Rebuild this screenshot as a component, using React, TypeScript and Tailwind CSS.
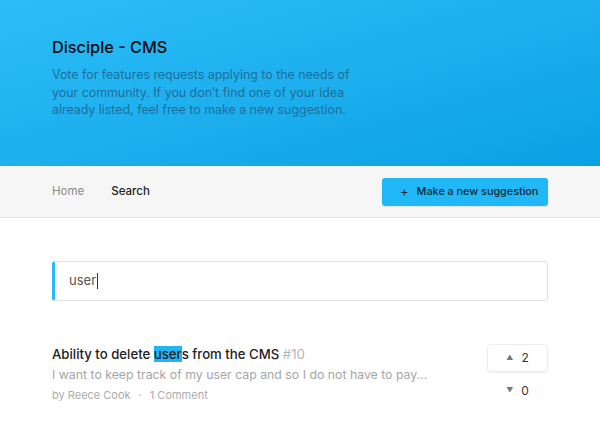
import React from 'react';

const App: React.FC = () => {
  return (
    <div className="min-h-screen bg-white" style={{ fontFamily: 'Inter, "Noto Sans", sans-serif' }}>
      {/* header */}
      <div className="h-[166px] bg-gradient-to-br from-[#2cbdf9] to-[#07a1e3] px-[52px] pt-[35px]">
        <h1 className="text-[16.3px] leading-[24px] font-medium text-[#0b0b0b]">Disciple - CMS</h1>
        <p className="mt-[7px] w-[310px] text-[12.4px] leading-[17.5px] text-[#1d6f9a]">
          Vote for features requests applying to the needs of your community. If you don’t find one of your idea
          already listed, feel free to make a new suggestion.
        </p>
      </div>

      {/* nav */}
      <div className="h-[52px] bg-[#f6f6f6] border-b border-[#e4e4e4] px-[52px] flex items-center justify-between">
        <div className="flex items-center gap-[27px] text-[11.5px]">
          <span className="text-[#8a8a8a]">Home</span>
          <span className="text-[#222] font-medium">Search</span>
        </div>
        <button className="h-[28px] w-[166px] rounded-[3px] bg-[#20b8f6] text-[10.8px] font-medium text-[#0d2a3a] flex items-center pl-[18px] gap-[8px] shadow-[0_1px_1px_rgba(0,0,0,0.08)]">
          <span className="text-[13px] font-normal">+</span>
          <span className="pt-px">Make a new suggestion</span>
        </button>
      </div>

      <div className="px-[52px]">
        {/* search */}
        <div className="mt-[43px] h-[40px] rounded-[3px] border border-[#e2e2e2] border-l-[3px] border-l-[#27bcf7] flex items-center pl-[14px]">
          <span className="text-[13px] text-[#555]">user</span>
          <span className="ml-[1px] h-[16px] w-px bg-[#333]" />
        </div>

        {/* result */}
        <div className="mt-[43px] flex justify-between">
          <div>
            <div className="text-[13.2px] leading-[20px] text-[#222] font-medium">
              Ability to delete <span className="bg-[#22b5f2]">user</span>s from the CMS{' '}
              <span className="text-[#b5b5b5] font-normal">#10</span>
            </div>
            <div className="mt-[2px] text-[12.3px] leading-[18px] text-[#a6a6a6]">
              I want to keep track of my user cap and so I do not have to pay...
            </div>
            <div className="mt-[3px] text-[11px] leading-[16px] text-[#acacac] flex items-center gap-[8px]">
              <span>by Reece Cook</span>
              <span>·</span>
              <span>1 Comment</span>
            </div>
          </div>
          <div className="flex flex-col items-center w-[61px]">
            <div className="h-[28px] w-[61px] rounded-[4px] border border-[#ececec] shadow-[0_1px_2px_rgba(0,0,0,0.06)] flex items-center justify-center gap-[8px]">
              <span className="text-[7px] text-[#777]">▲</span>
              <span className="text-[12px] text-[#333]">2</span>
            </div>
            <div className="mt-[10px] flex items-center justify-center gap-[8px]">
              <span className="text-[7px] text-[#777]">▼</span>
              <span className="text-[12px] text-[#333]">0</span>
            </div>
          </div>
        </div>
      </div>
    </div>
  );
};

export default App;
